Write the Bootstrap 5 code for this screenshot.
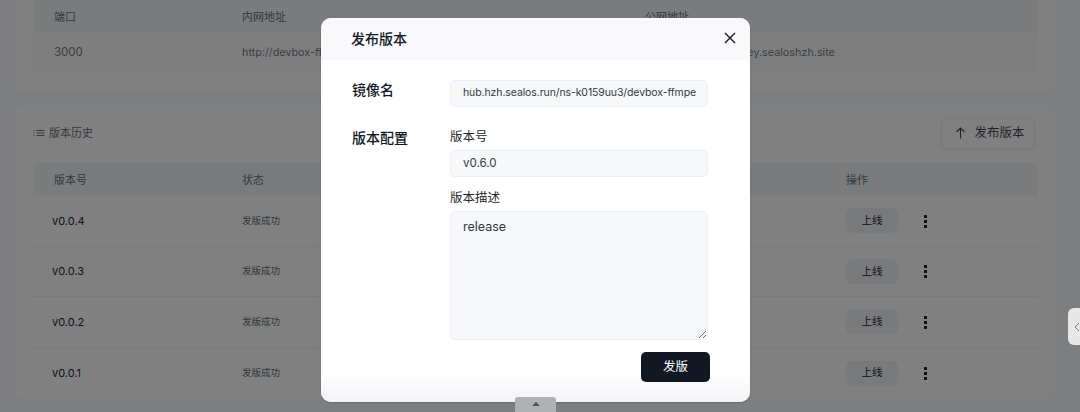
<!DOCTYPE html>
<html lang="zh">
<head>
<meta charset="utf-8">
<link rel="stylesheet" href="https://cdn.jsdelivr.net/npm/bootstrap@5.3.0/dist/css/bootstrap.min.css">
<style>
html,body{height:412px;overflow:hidden}
body{background:#7d7e80;font-family:Inter,"Noto Sans CJK SC",sans-serif;color:#111824;font-size:12px}
.page-wrap{padding:0 25px 0 15px;margin-top:-12px;height:424px;display:flex;flex-direction:column;gap:14px}
.panel{background:#808080;border-radius:6px;padding:0 17px 0 18px}
.panel-top{height:104px;padding-top:12px;flex:none}
.panel-bottom{height:292px;flex:none}
.grid-row{display:grid;grid-template-columns:188px 403px 201px 1fr;padding-left:21px;align-items:center}
.grid-head{height:33px;background:#797b7d;border-radius:6px 6px 0 0;color:#33383c;font-size:11px;padding-top:1px}
.port-row{height:40px;color:#3a3f43;font-size:10.8px;background:#7e7e7f;border-radius:0 0 6px 6px}
.port-num{font-size:11.5px}
.ver-title{height:57px;color:#33383c;font-size:11px;padding-bottom:3px}
.ver-row{height:50.6px;border-bottom:1px solid #77797b}
.ver-row:last-child{border-bottom:0}
.ver-name{margin-left:-2px;font-size:11px;font-weight:400;color:#0d1218}
.ver-state{font-size:9.5px;color:#33383c}
.publish-btn{width:94px;height:31px;border:1px solid #78797b;border-radius:6px;font-size:12.5px;color:#20242a;background:#808080;box-shadow:0 1px 2px rgba(0,0,0,.08);margin-right:3px;padding:0 0 0 4px}
.online-btn{width:52px;height:25px;border-radius:6px;background:#797a7b;font-size:10.5px;color:#0d1218;padding:0;border:0}
.dots{width:3px;height:14px;margin-left:26px;background:radial-gradient(circle,#0d1218 1.5px,transparent 1.7px) 0 0/3px 5px repeat-y}
.dialog{position:absolute;z-index:20;left:321px;top:18px;width:429px;height:384px;background:#fff;border-radius:10px;overflow:hidden;box-shadow:0 1px 2px rgba(0,0,0,.15)}
.dialog-head{height:42px;background:#f9f9fb;padding:0 13px 2px 30px;color:#111824;font-size:14px;font-weight:500}
.dialog-close{width:14px;height:14px;padding:0;border:0;background:none;display:flex}
.dialog-body{padding:20px 42px 0 31px}
.field-label{width:98px;font-size:14px;font-weight:500;flex:none;color:#111824;line-height:20px}
.field-row{margin-bottom:21px}
.field-sub{font-size:12.5px;color:#24282c;line-height:18px;margin-bottom:4px}
.fake-input{width:258px;height:27px;background:#f7f8fa;border:1px solid #eceef2;border-radius:5px;padding:0 12px;font-size:11.5px;color:#33383e;display:flex;align-items:center;white-space:nowrap;overflow:hidden;line-height:1;margin-bottom:12px}
.image-input{font-size:10.5px;letter-spacing:-.1px;margin-bottom:0}
.fake-area{width:258px;height:129px;background:#f7f8fa;border:1px solid #eceef2;border-radius:5px;padding:6px 12px;font-size:12.5px;color:#33383e;resize:vertical;display:block;font-family:inherit}
.submit-btn{width:69px;height:30px;background:#111824;color:#fff;border:0;border-radius:5px;font-size:12.5px;padding:0;position:absolute;right:40px;top:334px;z-index:2}
.fade-foot{position:absolute;left:0;right:0;bottom:0;height:30px;background:linear-gradient(transparent,#f3f4f7)}
.pull-tab{position:absolute;z-index:30;left:515px;top:397px;width:41px;height:15px;background:#b0b1b3;border-radius:3px 3px 0 0;display:flex;justify-content:center;padding-top:5px}
.side-tab{position:absolute;z-index:30;right:0;top:308px;width:12px;height:37px;background:#e8e8e9;border-radius:6px 0 0 6px;display:flex;align-items:center;padding-left:6px}
</style>
</head>
<body>
<div class="page-wrap">
  <section class="panel panel-top">
    <div class="grid-row grid-head"><span>端口</span><span>内网地址</span><span>公网地址</span><span></span></div>
    <div class="grid-row port-row"><span class="port-num">3000</span><span>http://devbox-ffmpeg.ns-k0159uu3:3000</span><span class="text-nowrap">https://devbox-ffmpey.sealoshzh.site</span><span></span></div>
  </section>
  <section class="panel panel-bottom">
    <div class="d-flex align-items-center justify-content-between ver-title">
      <span class="d-flex align-items-center gap-1">
        <svg width="12" height="12" viewBox="0 0 12 12" fill="none" stroke="#33383c"><path d="M3.5 3.5H11.5M3.5 6H11.5M3.5 8.5H11.5M.5 3.5H1.5M.5 6H1.5M.5 8.5H1.5"/></svg>
        版本历史
      </span>
      <button class="btn publish-btn d-flex align-items-center justify-content-center gap-2">
        <svg width="11" height="12" viewBox="0 0 11 12" fill="none" stroke="#20242a" stroke-width="1.1"><path d="M5.5 11.5V1M1.5 5L5.5 1L9.5 5"/></svg>
        发布版本
      </button>
    </div>
    <div class="grid-row grid-head"><span>版本号</span><span>状态</span><span></span><span>操作</span></div>
    <div>
      <div class="grid-row ver-row"><span class="ver-name">v0.0.4</span><span class="ver-state">发版成功</span><span></span><span class="d-flex align-items-center"><button class="btn online-btn">上线</button><i class="dots"></i></span></div>
      <div class="grid-row ver-row"><span class="ver-name">v0.0.3</span><span class="ver-state">发版成功</span><span></span><span class="d-flex align-items-center"><button class="btn online-btn">上线</button><i class="dots"></i></span></div>
      <div class="grid-row ver-row"><span class="ver-name">v0.0.2</span><span class="ver-state">发版成功</span><span></span><span class="d-flex align-items-center"><button class="btn online-btn">上线</button><i class="dots"></i></span></div>
      <div class="grid-row ver-row"><span class="ver-name">v0.0.1</span><span class="ver-state">发版成功</span><span></span><span class="d-flex align-items-center"><button class="btn online-btn">上线</button><i class="dots"></i></span></div>
    </div>
  </section>
</div>
<div class="side-tab"><svg width="6" height="10" viewBox="0 0 6 10" fill="none" stroke="#777"><path d="M5 1L1 5L5 9"/></svg></div>
<div class="dialog">
  <div class="dialog-head d-flex align-items-center justify-content-between">
    <span>发布版本</span>
    <button class="dialog-close" aria-label="关闭"><svg width="14" height="14" viewBox="0 0 14 14" fill="none" stroke="#111824" stroke-width="1.4"><path d="M2 2L12 12M12 2L2 12"/></svg></button>
  </div>
  <div class="dialog-body">
    <div class="d-flex field-row">
      <div class="field-label">镜像名</div>
      <div class="fake-input image-input">hub.hzh.sealos.run/ns-k0159uu3/devbox-ffmpe</div>
    </div>
    <div class="d-flex">
      <div class="field-label">版本配置</div>
      <div>
        <div class="field-sub">版本号</div>
        <div class="fake-input">v0.6.0</div>
        <div class="field-sub">版本描述</div>
        <textarea class="fake-area">release</textarea>
      </div>
    </div>
  </div>
  <button class="btn submit-btn">发版</button>
  <div class="fade-foot"></div>
</div>
<div class="pull-tab"><svg width="8" height="4" viewBox="0 0 8 4"><path d="M4 0L8 4H0Z" fill="#555"/></svg></div>
<script src="https://cdn.jsdelivr.net/npm/bootstrap@5.3.0/dist/js/bootstrap.bundle.min.js"></script>
</body>
</html>
